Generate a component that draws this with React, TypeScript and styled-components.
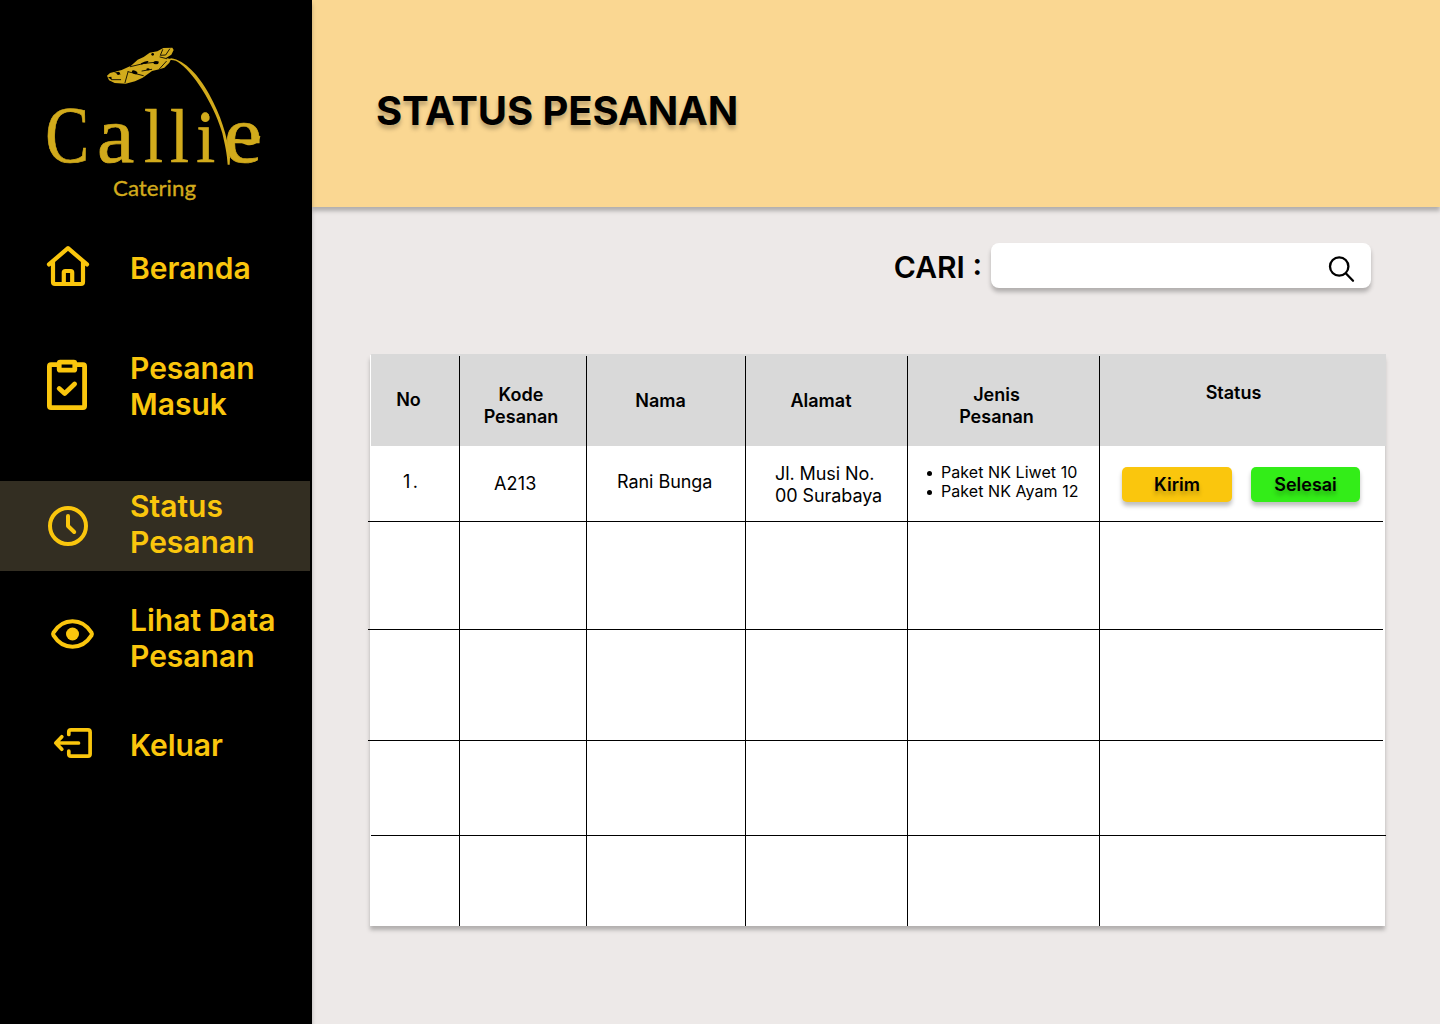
import React from "react";
import styled, { createGlobalStyle } from "styled-components";

const GlobalStyle = createGlobalStyle`
  *, *::before, *::after { box-sizing: border-box; }
  html, body { margin: 0; padding: 0; }
  body { background: #ede9e8; color: #000; font-family: Inter, "Liberation Sans", sans-serif; }
`;

const GOLD = "#fac60d";
const LOGO = "#d2ab1c";
const SHADOW = "0 4px 4px rgba(0, 0, 0, 0.25)";

const Page = styled.div`
  display: flex;
  width: 1440px;
  height: 1024px;
  overflow: hidden;
`;

const Sidebar = styled.aside`
  flex: none;
  z-index: 1;
  width: 312px;
  background: #000;
  box-shadow: ${SHADOW};
`;

const LogoBox = styled.div`
  height: 220px;
  padding: 30px 0 0 30px;
  svg { display: block; }
`;

const NavItem = styled.a<{ $height: number; $active?: boolean }>`
  display: flex;
  align-items: flex-start;
  width: 310px;
  height: ${(p) => p.$height}px;
  background: ${(p) => (p.$active ? "#332e22" : "transparent")};
  color: ${GOLD};
  text-decoration: none;
`;

const NavIcon = styled.span<{ $top: number; $left: number }>`
  flex: none;
  width: 130px;
  padding: ${(p) => p.$top}px 0 0 ${(p) => p.$left}px;
  svg { display: block; fill: none; stroke: ${GOLD}; stroke-width: 4; stroke-linecap: round; stroke-linejoin: round; }
`;

const NavLabel = styled.span<{ $top: number }>`
  padding-top: ${(p) => p.$top}px;
  font-size: 30px;
  font-weight: 600;
  line-height: 36px;
  white-space: pre-line;
`;

const Main = styled.main`
  flex: 1;
  display: flex;
  flex-direction: column;
`;

const Header = styled.header`
  height: 207px;
  padding: 86px 0 0 64px;
  background: #fad792;
  box-shadow: ${SHADOW};
`;

const Title = styled.h1`
  margin: 0;
  font-size: 40px;
  font-weight: 700;
  letter-spacing: -0.12px;
  line-height: 50px;
  text-shadow: 0 4px 4px rgba(0, 0, 0, 0.25);
`;

const SearchRow = styled.label`
  display: flex;
  justify-content: flex-end;
  gap: 9px;
  padding: 36px 69px 0 0;
  font-size: 30px;
  font-weight: 600;
  line-height: 49px;
`;

const SearchBox = styled.span`
  display: flex;
  justify-content: flex-end;
  width: 380px;
  height: 45px;
  padding: 11px 15px 0 0;
  border-radius: 8px;
  background: #fff;
  box-shadow: ${SHADOW};
`;

const Table = styled.section`
  width: 1015px;
  height: 571px;
  margin: 63px 0 0 58px;
  background: #fff;
  box-shadow: ${SHADOW};
`;

const HeadRow = styled.div`
  display: grid;
  grid-template-columns: 88px 127px 159px 162px 192px 287px;
  width: 1015px;
  height: 92px;
  margin: -1px 0 0 1px;
  padding-top: 2px;
  background: #d9d9d9;
`;

const Row = styled.div<{ $height: number }>`
  display: grid;
  grid-template-columns: 89px 127px 159px 162px 192px 286px;
  height: ${(p) => p.$height}px;
`;

const Rule = styled.div<{ $shift: number }>`
  width: 1015px;
  height: 1px;
  margin-left: ${(p) => p.$shift}px;
  background: #000;
`;

const Cell = styled.div<{ $top?: number; $left?: number; $spacing?: number }>`
  padding: ${(p) => p.$top ?? 0}px 0 0 ${(p) => p.$left ?? 0}px;
  font-size: 18px;
  letter-spacing: ${(p) => p.$spacing ?? 0}px;
  line-height: 22px;
  white-space: pre-line;
  & + & { border-left: 1px solid #000; }
`;

const HeadCell = styled(Cell)<{ $right?: number }>`
  padding-right: ${(p) => p.$right ?? 0}px;
  font-weight: 600;
  text-align: center;
`;

const OrderList = styled.ul`
  margin: 0;
  padding: 0;
  font-size: 16px;
  letter-spacing: 0.06px;
  line-height: 19px;
  list-style: none;
`;

const OrderItem = styled.li`
  display: flex;
  align-items: center;
  gap: 9.5px;
  &::before {
    content: "";
    width: 5px;
    height: 5px;
    margin: 2px 0 0 9.5px;
    border-radius: 50%;
    background: #000;
  }
`;

const Actions = styled.div`
  display: flex;
  gap: 19px;
`;

const ActionButton = styled.button<{ $color: string; $width: number }>`
  width: ${(p) => p.$width}px;
  height: 35px;
  padding: 0;
  border: 0;
  border-radius: 5px;
  background: ${(p) => p.$color};
  box-shadow: ${SHADOW};
  color: #000;
  font: 600 18px/35px Inter, "Liberation Sans", sans-serif;
  text-shadow: 0 4px 4px rgba(0, 0, 0, 0.25);
`;

const Logo = () => (
  <svg width="250" height="190" viewBox="0 0 750 570">
    <g fill={LOGO} fontFamily="Liberation Serif, serif" fontSize="238" stroke={LOGO} strokeWidth="2">
      <text transform="translate(46 396) scale(.83 1.02)">C</text>
      <text transform="translate(201 396) scale(1.06 1.02)">a</text>
      <text transform="translate(342 396) scale(.86 .96)">l</text>
      <text transform="translate(420 396) scale(.86 .96)">l</text>
      <text transform="translate(499 396) scale(.86 .92)">i</text>
      <text transform="translate(581 396) scale(1.09 1.03)">e</text>
    </g>
    <circle cx="526" cy="263" r="13" fill={LOGO} />
    <path d="M604 338C622 320 636 340 654 342C673 344 684 334 688 318" fill="none" stroke={LOGO} strokeWidth="7" />
    <text x="249" y="499" fill={LOGO} stroke={LOGO} strokeWidth="1" fontFamily="Lato, sans-serif" fontSize="66" textLength="249" lengthAdjust="spacingAndGlyphs">Catering</text>
    <path d="M398 101C413 88 431 85 451 101C500 138 558 239 577 310C585 345 591 370 593 404H599L600 382C592 316 572 256 537 192C507 137 465 91 423 85Z" fill={LOGO} />
    <path d="M231 137L240 129L275 120L303 107L323 89L341 81L359 68L382 64L400 54L427 53L431 60L424 74L408 84L423 87L418 98L403 113L388 118L366 123L338 143L315 154L287 161L254 159L237 151Z" fill={LOGO} />
    <g fill="none" stroke="#000" strokeWidth="2.6" strokeLinecap="round">
      <path d="M246 149H272M294 126L285 158M294 125L340 137M301 110L352 98M345 100L385 96M388 117L409 94M390 81L410 86M398 59L391 76L407 75L419 57M253 125L270 132M336 123L365 118" />
    </g>
    <g fill="#000">
      <ellipse cx="314" cy="127" rx="9" ry="5" transform="rotate(20 314 127)" />
      <ellipse cx="344" cy="98" rx="12" ry="3" transform="rotate(-20 344 98)" />
      <ellipse cx="378" cy="98" rx="8" ry="5" />
      <ellipse cx="354" cy="118" rx="5" ry="3" />
      <circle cx="368" cy="73" r="4" />
      <circle cx="265" cy="130" r="5" />
      <path d="M234 142L244 140L246 151Z" />
    </g>
  </svg>
);

const HomeIcon = () => (
  <svg width="44" height="44" viewBox="46 244 44 44">
    <path d="M49 264.4L68 248.2L87 264.4M53 262V282Q53 284 55 284H81Q83 284 83 282V262M63.8 283V272.5Q63.8 271 65.3 271H70.7Q72.2 271 72.2 272.5V283" strokeWidth="4.2" />
  </svg>
);

const ClipboardIcon = () => (
  <svg width="44" height="54" viewBox="45 358 44 54">
    <g strokeWidth="4.8">
      <path d="M58 364.7H51Q49.4 364.7 49.4 366.3V406Q49.4 407.6 51 407.6H83Q84.6 407.6 84.6 406V366.3Q84.6 364.7 83 364.7H76" />
      <rect x="59.2" y="362.2" width="15.6" height="8" rx="1" />
      <path d="M59.2 388.5L64.7 393.5L74.6 384" />
    </g>
  </svg>
);

const ClockIcon = () => (
  <svg width="44" height="44" viewBox="46 504 44 44">
    <circle cx="68" cy="526" r="18" />
    <path d="M68 516V526L74.2 532" />
  </svg>
);

const EyeIcon = () => (
  <svg width="46" height="34" viewBox="50 617 46 34">
    <path d="M53.5 632.6C63 617.5 82 617.5 91.5 632.6Q92.3 634 91.5 635.4C82 650.5 63 650.5 53.5 635.4Q52.7 634 53.5 632.6Z" />
    <circle cx="72.5" cy="634" r="6.5" fill={GOLD} stroke="none" />
  </svg>
);

const LogoutIcon = () => (
  <svg width="42" height="34" viewBox="52 726 42 34">
    <path d="M68.8 734.5V732Q68.8 729.9 71 729.9H88Q90.1 729.9 90.1 732V754Q90.1 756.1 88 756.1H71Q68.8 756.1 68.8 754V751M56 743H78.5M61.8 736.8L55.8 743L61.8 749.2" strokeWidth="3.7" />
  </svg>
);

const SearchIcon = () => (
  <svg width="28" height="30" viewBox="1328 254 28 30" fill="none" stroke="#000" strokeWidth="2.3" strokeLinecap="round">
    <circle cx="1339.2" cy="266.5" r="9.2" />
    <path d="M1346 273.5L1353 280.7" />
  </svg>
);

const navItems = [
  { label: "Beranda", icon: <HomeIcon />, height: 100, iconTop: 24, iconLeft: 46, textTop: 30 },
  { label: "Pesanan\nMasuk", icon: <ClipboardIcon />, height: 161, iconTop: 38, iconLeft: 45, textTop: 30 },
  { label: "Status\nPesanan", icon: <ClockIcon />, height: 90, iconTop: 23, iconLeft: 46, textTop: 7, active: true },
  { label: "Lihat Data\nPesanan", icon: <EyeIcon />, height: 119, iconTop: 46, iconLeft: 50, textTop: 31 },
  { label: "Keluar", icon: <LogoutIcon />, height: 100, iconTop: 36, iconLeft: 52, textTop: 37 },
];

const emptyRows = [
  { height: 107, shift: -2 },
  { height: 110, shift: -2 },
  { height: 94, shift: 1 },
  { height: 90, shift: null },
];

export default function App() {
  return (
    <Page>
      <GlobalStyle />
      <Sidebar>
        <LogoBox><Logo /></LogoBox>
        <nav>
          {navItems.map((item) => (
            <NavItem key={item.label} $height={item.height} $active={item.active}>
              <NavIcon $top={item.iconTop} $left={item.iconLeft}>{item.icon}</NavIcon>
              <NavLabel $top={item.textTop}>{item.label}</NavLabel>
            </NavItem>
          ))}
        </nav>
      </Sidebar>
      <Main>
        <Header><Title>STATUS PESANAN</Title></Header>
        <SearchRow>
          CARI :
          <SearchBox><SearchIcon /></SearchBox>
        </SearchRow>
        <Table>
          <HeadRow>
            <HeadCell $top={33} $right={13}>No</HeadCell>
            <HeadCell $top={28} $right={4}>{"Kode\nPesanan"}</HeadCell>
            <HeadCell $top={34} $right={11}>Nama</HeadCell>
            <HeadCell $top={34} $right={11}>Alamat</HeadCell>
            <HeadCell $top={28} $right={14}>{"Jenis\nPesanan"}</HeadCell>
            <HeadCell $top={26} $right={19}>Status</HeadCell>
          </HeadRow>
          <Row $height={75}>
            <Cell $top={25} $left={33} $spacing={2.5}>1.</Cell>
            <Cell $top={27} $left={34} $spacing={0.2}>A213</Cell>
            <Cell $top={25} $left={30} $spacing={-0.05}>Rani Bunga</Cell>
            <Cell $top={17} $left={29} $spacing={-0.08}>{"Jl. Musi No.\n00 Surabaya"}</Cell>
            <Cell $top={17} $left={9}>
              <OrderList>
                <OrderItem>Paket NK Liwet 10</OrderItem>
                <OrderItem>Paket NK Ayam 12</OrderItem>
              </OrderList>
            </Cell>
            <Cell $top={21} $left={22}>
              <Actions>
                <ActionButton $color="#fac60d" $width={110}>Kirim</ActionButton>
                <ActionButton $color="#33ed18" $width={109}>Selesai</ActionButton>
              </Actions>
            </Cell>
          </Row>
          <Rule $shift={-2} />
          {emptyRows.map((row, i) => (
            <React.Fragment key={i}>
              <Row $height={row.height}>
                <Cell /><Cell /><Cell /><Cell /><Cell /><Cell />
              </Row>
              {row.shift !== null && <Rule $shift={row.shift} />}
            </React.Fragment>
          ))}
        </Table>
      </Main>
    </Page>
  );
}
